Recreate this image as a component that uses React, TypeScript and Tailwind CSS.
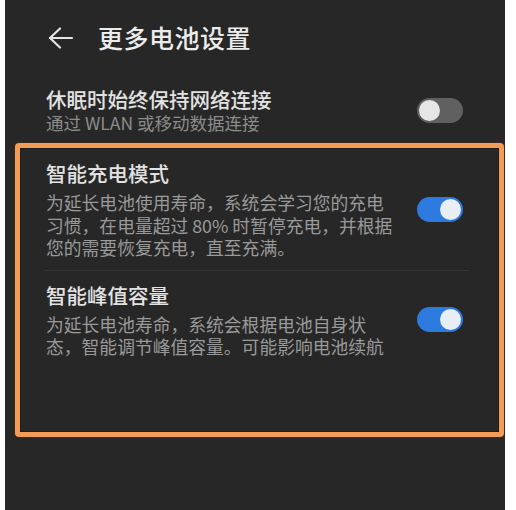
import { ReactNode } from 'react';

const font = { fontFamily: '"Noto Sans CJK SC", "Noto Sans", sans-serif' };

function Toggle({ on }: { on: boolean }) {
  return (
    <div
      className={`shrink-0 w-[46px] h-[25px] rounded-full flex items-center px-[2px] ${
        on ? 'bg-[#2e7be0] justify-end' : 'bg-[#606060] justify-start'
      }`}
    >
      <div className={`w-[21px] h-[21px] rounded-full ${on ? 'bg-[#e9eef4]' : 'bg-[#e6e6e6]'}`} />
    </div>
  );
}

function Setting({ title, lines, on }: { title: string; lines: string[]; on: boolean }) {
  return (
    <div className="flex items-center justify-between">
      <div>
        <div className="text-[20.5px] leading-[26px] font-medium text-[#e2e2e2]">{title}</div>
        <div className="mt-[5px] text-[17.8px] leading-[22.5px] text-[#9a9a9a]">
          {lines.map((l) => (
            <div key={l} className="whitespace-nowrap">{l}</div>
          ))}
        </div>
      </div>
      <Toggle on={on} />
    </div>
  );
}

function Highlight({ children }: { children: ReactNode }) {
  return (
    <div className="mt-[9px] ml-[10px] mr-[1px] h-[294px] border-[5px] border-[#f39c58] rounded-[4px] shadow-[0_0_0_1px_#3a2a22]">
      <div className="h-full border border-[#1d1d1d] pl-[25px] pr-[35px] pt-[11px]">{children}</div>
    </div>
  );
}

export default function App() {
  return (
    <div className="w-[516px] h-[510px] bg-white" style={font}>
      <div className="ml-[5px] w-[500px] h-full bg-[#272727] overflow-hidden">
        {/* Header */}
        <header className="h-[76px] flex items-center pl-[43px]">
          <svg width="26" height="22" viewBox="0 0 26 22" fill="none" stroke="#e4e4e4" strokeWidth="2.2" strokeLinecap="round" strokeLinejoin="round">
            <path d="M2 11 H24" />
            <path d="M12 1.5 L2 11 L12 20.5" />
          </svg>
          <h1 className="ml-[24px] text-[25px] font-medium text-[#ececec] tracking-[0.5px]">更多电池设置</h1>
        </header>

        {/* Sleep network */}
        <div className="mt-[10px] pl-[41px] pr-[42px] flex items-center justify-between">
          <div>
            <div className="text-[20.5px] leading-[26px] font-medium text-[#e2e2e2]">休眠时始终保持网络连接</div>
            <div className="text-[17.5px] leading-[22px] text-[#8c8c8c]">通过 WLAN 或移动数据连接</div>
          </div>
          <Toggle on={false} />
        </div>

        <Highlight>
          <Setting
            title="智能充电模式"
            on
            lines={[
              '为延长电池使用寿命，系统会学习您的充电',
              '习惯，在电量超过 80% 时暂停充电，并根据',
              '您的需要恢复充电，直至充满。',
            ]}
          />
          <div className="mt-[11px] -mr-[6px] -ml-[2px] h-px bg-[#343434]" />
          <div className="mt-[11px]">
            <Setting
              title="智能峰值容量"
              on
              lines={[
                '为延长电池寿命，系统会根据电池自身状',
                '态，智能调节峰值容量。可能影响电池续航',
              ]}
            />
          </div>
        </Highlight>
      </div>
    </div>
  );
}
